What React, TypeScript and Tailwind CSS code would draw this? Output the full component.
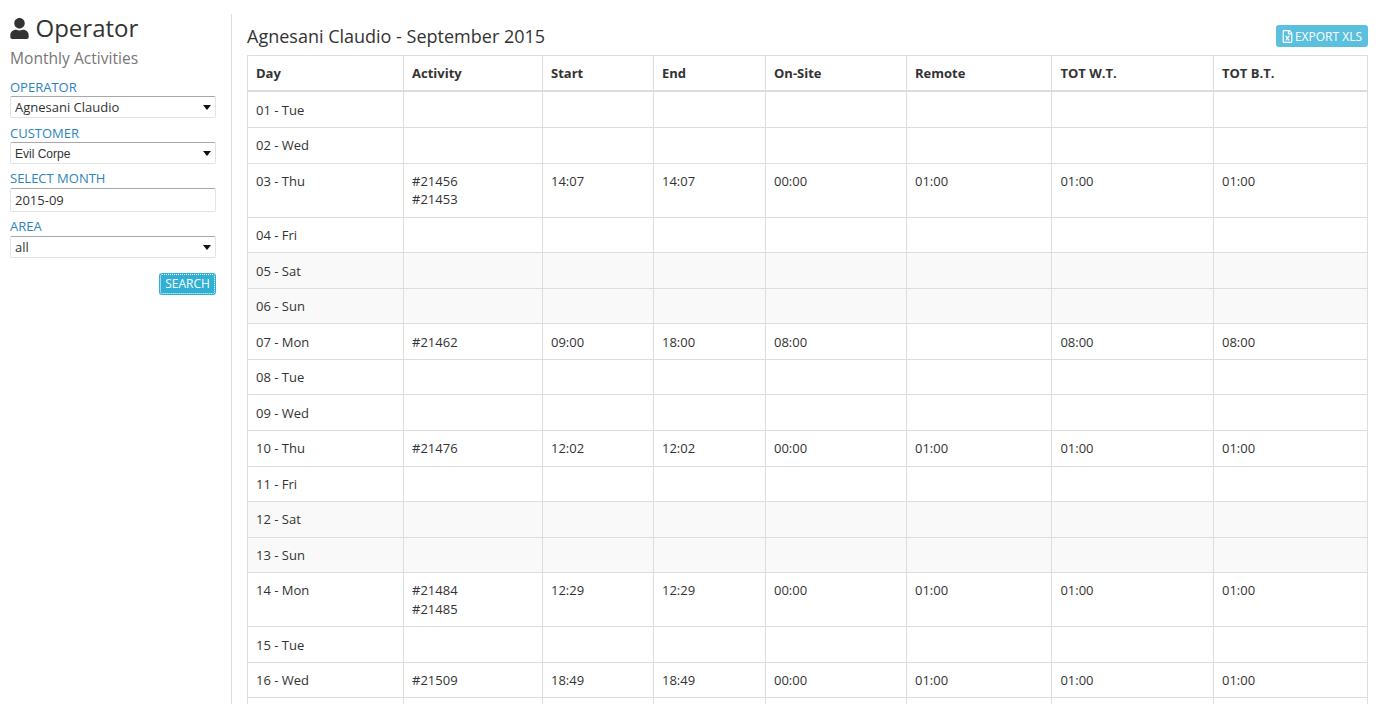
import { FaRegFileExcel, FaUser } from "react-icons/fa";

interface DayRow {
  day: string;
  activity?: string[];
  start?: string;
  end?: string;
  onSite?: string;
  remote?: string;
  totWt?: string;
  totBt?: string;
  weekend?: boolean;
}

const rows: DayRow[] = [
  { day: "01 - Tue" },
  { day: "02 - Wed" },
  { day: "03 - Thu", activity: ["#21456", "#21453"], start: "14:07", end: "14:07", onSite: "00:00", remote: "01:00", totWt: "01:00", totBt: "01:00" },
  { day: "04 - Fri" },
  { day: "05 - Sat", weekend: true },
  { day: "06 - Sun", weekend: true },
  { day: "07 - Mon", activity: ["#21462"], start: "09:00", end: "18:00", onSite: "08:00", totWt: "08:00", totBt: "08:00" },
  { day: "08 - Tue" },
  { day: "09 - Wed" },
  { day: "10 - Thu", activity: ["#21476"], start: "12:02", end: "12:02", onSite: "00:00", remote: "01:00", totWt: "01:00", totBt: "01:00" },
  { day: "11 - Fri" },
  { day: "12 - Sat", weekend: true },
  { day: "13 - Sun", weekend: true },
  { day: "14 - Mon", activity: ["#21484", "#21485"], start: "12:29", end: "12:29", onSite: "00:00", remote: "01:00", totWt: "01:00", totBt: "01:00" },
  { day: "15 - Tue" },
  { day: "16 - Wed", activity: ["#21509"], start: "18:49", end: "18:49", onSite: "00:00", remote: "01:00", totWt: "01:00", totBt: "01:00" },
  // next row only shows its top border above the fold
  { day: "" },
];

const headers = ["Day", "Activity", "Start", "End", "On-Site", "Remote", "TOT W.T.", "TOT B.T."];

function Field({ label, children }: { label: string; children: React.ReactNode }) {
  return (
    <div>
      <div className="text-[13px] leading-[18.57px] uppercase text-[#2c84bd]">{label}</div>
      {children}
    </div>
  );
}

function SelectBox({ value, arial }: { value: string; arial?: boolean }) {
  return (
    <div className="relative">
      <select
        defaultValue={value}
        className={`block w-full h-[22px] appearance-none rounded-[2px] border border-[#e3e3e3] border-t-[#a9a9ad] bg-white pl-1 pt-px text-[#333] outline-none ${arial ? "font-['Liberation_Sans',sans-serif] text-xs" : "text-[13px]"}`}
      >
        <option>{value}</option>
      </select>
      <svg viewBox="0 0 8 5" className="absolute right-[5px] top-[9px] w-2 h-[5px] pointer-events-none">
        <path d="M0 0h8L4 5z" fill="#111" />
      </svg>
    </div>
  );
}

function Cell({ children }: { children?: React.ReactNode }) {
  return <td className="border border-[#ddd] px-2 pt-[8.33px] pb-[7.67px] align-top leading-[1.42857]">{children}</td>;
}

export default function App() {
  return (
    <div className="flex h-[704px] overflow-hidden bg-white font-['Open_Sans',sans-serif] text-[13px] text-[#333]">
      <aside className="w-[232px] shrink-0 pt-[14px]">
        <div className="h-full w-full border-r border-[#ddd] pl-[10px] pr-[15px]">
          <h1 className="flex items-center gap-[6.5px] text-2xl leading-[28px] text-[#333]">
            <FaUser className="w-[19px] h-[21px]" />
            Operator
          </h1>
          <h2 className="mt-[6px] text-[15.6px] leading-5 text-[#777]">Monthly Activities</h2>
          <div className="mt-[9.62px] flex flex-col gap-[5.36px]">
            <Field label="Operator">
              <SelectBox value="Agnesani Claudio" />
            </Field>
            <Field label="Customer">
              <SelectBox value="Evil Corpe" arial />
            </Field>
            <Field label="Select month">
              <input
                readOnly
                value="2015-09"
                className="block w-full h-6 rounded-[2px] border border-[#e3e3e3] border-t-[#a9a9ad] px-1 text-[13px] outline-none"
              />
            </Field>
            <Field label="Area">
              <SelectBox value="all" />
            </Field>
          </div>
          <div className="mt-[15px] flex justify-end">
            <button className="h-[22px] w-[57px] rounded-[3px] bg-[#31b0d5] text-xs uppercase text-white outline-1 -outline-offset-2 outline-dotted outline-white">
              Search
            </button>
          </div>
        </div>
      </aside>
      <main className="flex-1 min-w-0 pl-[15px] pr-[11px]">
        <div className="flex h-[54.92px] items-start justify-between">
          <h3 className="mt-[26px] text-lg leading-[20px] text-[#333]">Agnesani Claudio - September 2015</h3>
          <button className="mt-[25px] flex h-[22px] items-center gap-[2px] rounded-[3px] bg-[#5bc0de] pl-[6px] pr-[6px] pt-px text-xs uppercase text-white">
            <FaRegFileExcel className="w-[11px] h-[13px]" />
            Export XLS
          </button>
        </div>
        <table className="w-[1120px] table-fixed border-collapse">
          <colgroup>
            <col className="w-[156px]" />
            <col className="w-[139px]" />
            <col className="w-[111px]" />
            <col className="w-[112px]" />
            <col className="w-[141px]" />
            <col className="w-[145.4px]" />
            <col className="w-[161.6px]" />
            <col className="w-[154px]" />
          </colgroup>
          <thead>
            <tr>
              {headers.map((h) => (
                <th key={h} className="border border-b-2 border-[#ddd] p-2 text-left align-bottom font-bold leading-[1.42857]">
                  {h}
                </th>
              ))}
            </tr>
          </thead>
          <tbody>
            {rows.map((r) => (
              <tr key={r.day} className={r.weekend ? "bg-[#f9f9f9]" : ""}>
                <Cell>{r.day}</Cell>
                <Cell>
                  {r.activity?.map((a) => (
                    <div key={a}>{a}</div>
                  ))}
                </Cell>
                <Cell>{r.start}</Cell>
                <Cell>{r.end}</Cell>
                <Cell>{r.onSite}</Cell>
                <Cell>{r.remote}</Cell>
                <Cell>{r.totWt}</Cell>
                <Cell>{r.totBt}</Cell>
              </tr>
            ))}
          </tbody>
        </table>
      </main>
    </div>
  );
}
